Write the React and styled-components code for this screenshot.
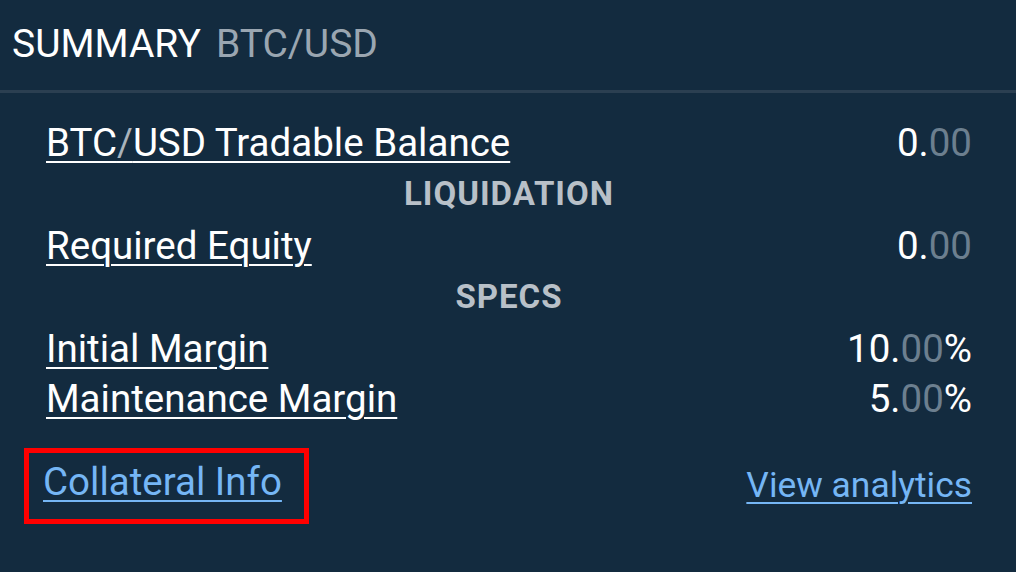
import styled, { createGlobalStyle } from "styled-components"

const GlobalStyle = createGlobalStyle`
  html, body {
    margin: 0;
    padding: 0;
    background: #132b3f;
  }
  body {
    font-family: Roboto, "Liberation Sans", sans-serif;
  }
`

const Panel = styled.div`
  width: 1016px;
  height: 572px;
  background: #132b3f;
  color: #ffffff;
  overflow: hidden;
`

const Header = styled.div`
  height: 93px;
  padding: 0 0 3px 12px;
  display: flex;
  align-items: center;
  border-bottom: 3px solid #2b3f51;
  box-sizing: border-box;
  font-size: 39px;
`

const Titulo = styled.span`
  color: #ffffff;
`

const Par = styled.span`
  color: #9aa6b1;
  margin-left: 15px;
`

const Body = styled.div`
  padding: 24px 44px 0 46px;
  display: flex;
  flex-direction: column;
`

const Row = styled.div`
  display: flex;
  justify-content: space-between;
  align-items: center;
  height: 50px;
  font-size: 38.5px;
`

const Label = styled.span`
  text-decoration: underline;
  text-decoration-thickness: 2px;
  text-underline-offset: 5px;
`

const Slash = styled.span`
  color: #a9b3bc;
`

const Value = styled.span`
  color: #ffffff;
`

const Dim = styled.span`
  color: #6c7f8f;
`

const Section = styled.div`
  height: 53px;
  display: flex;
  align-items: center;
  justify-content: center;
  font-size: 33px;
  font-weight: 700;
  letter-spacing: 1px;
  color: #b8c0c8;
`

const Footer = styled.div`
  display: flex;
  justify-content: space-between;
  align-items: flex-start;
  margin-top: 25px;
  margin-left: -22px;
`

const Destaque = styled.div`
  border: 5px solid #ff0000;
  padding: 6px 22px 15px 14px;
`

const Link = styled.a`
  color: #75b6f5;
  font-size: ${(p) => p.$size}px;
  margin-top: ${(p) => p.$desce || 0}px;
  text-decoration: underline;
  text-decoration-thickness: 2px;
  text-underline-offset: 5px;
  cursor: pointer;
`

function Numero({ inteiro, sufixo }) {
  return (
    <Value>
      {inteiro}.<Dim>00</Dim>{sufixo}
    </Value>
  )
}

function App() {
  return (
    <Panel>
      <GlobalStyle />
      <Header>
        <Titulo>SUMMARY</Titulo>
        <Par>BTC/USD</Par>
      </Header>
      <Body>
        <Row>
          <Label>BTC<Slash>/</Slash>USD Tradable Balance</Label>
          <Numero inteiro="0" />
        </Row>
        <Section>LIQUIDATION</Section>
        <Row>
          <Label>Required Equity</Label>
          <Numero inteiro="0" />
        </Row>
        <Section>SPECS</Section>
        <Row>
          <Label>Initial Margin</Label>
          <Numero inteiro="10" sufixo="%" />
        </Row>
        <Row>
          <Label>Maintenance Margin</Label>
          <Numero inteiro="5" sufixo="%" />
        </Row>
        <Footer>
          <Destaque>
            <Link $size={38.5}>Collateral Info</Link>
          </Destaque>
          <Link $size={35.4} $desce={16}>View analytics</Link>
        </Footer>
      </Body>
    </Panel>
  )
}

export default App
